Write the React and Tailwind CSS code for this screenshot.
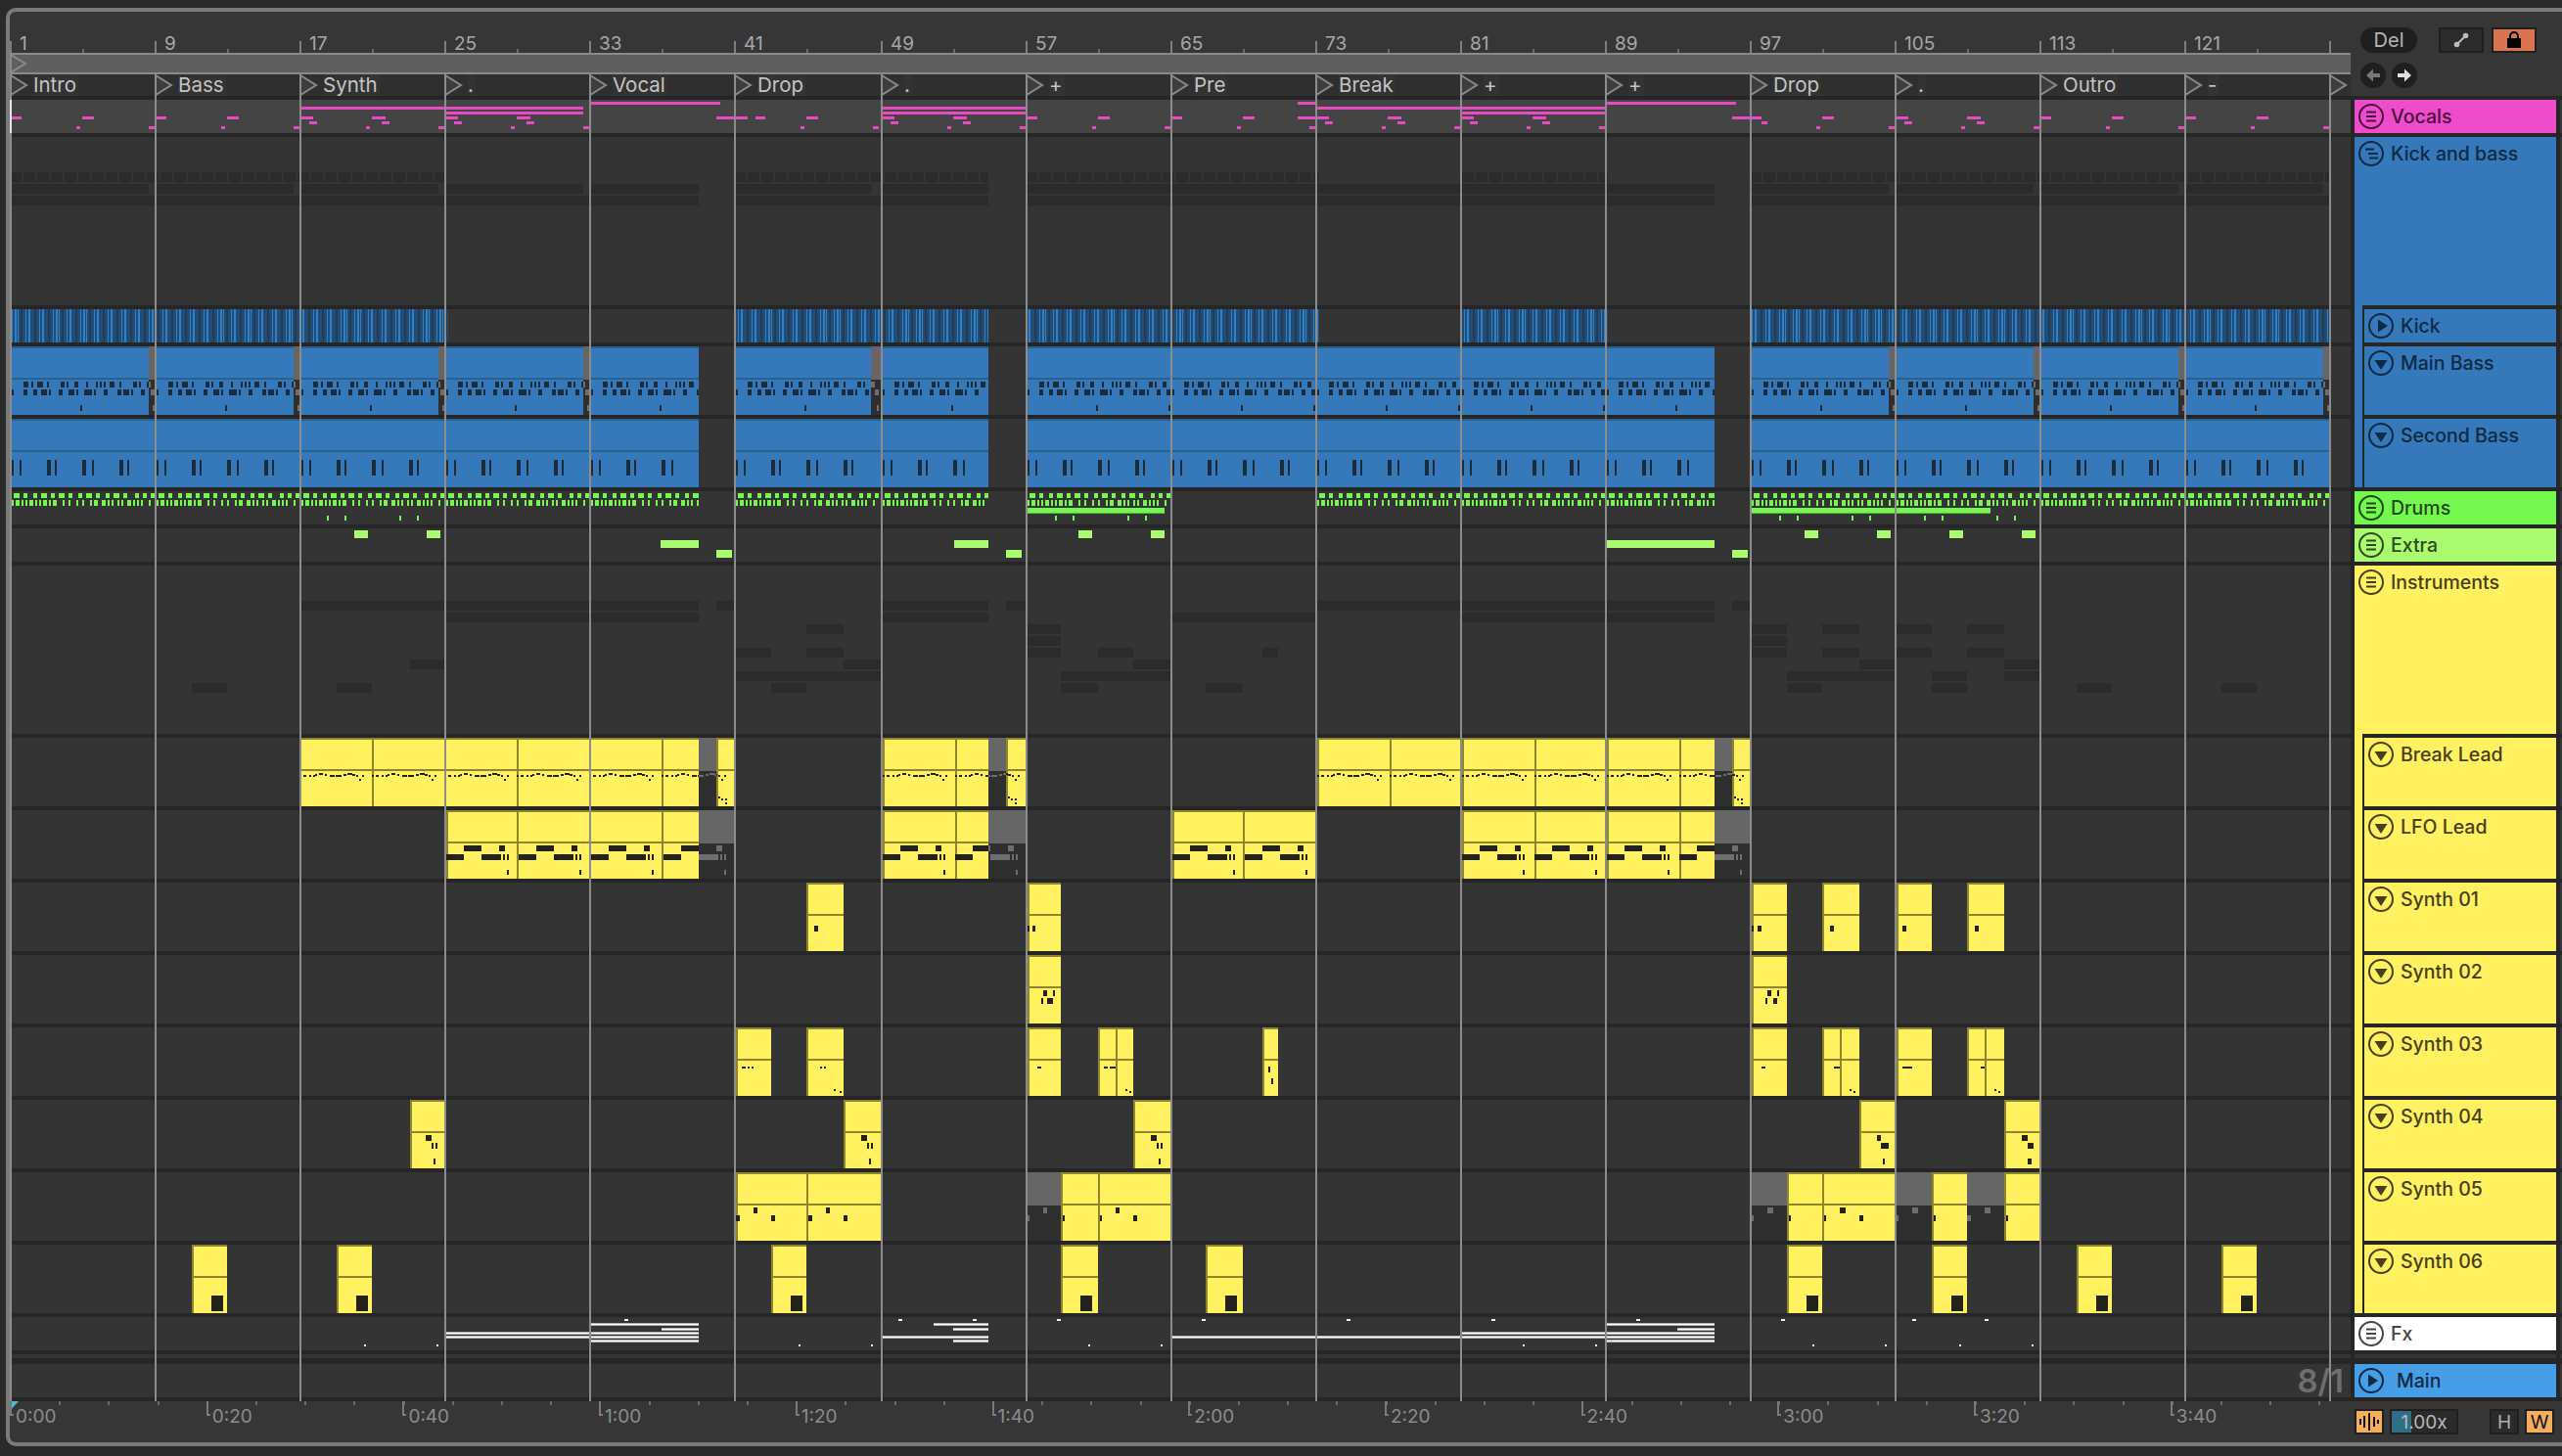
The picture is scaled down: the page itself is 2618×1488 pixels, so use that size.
const lineX = (n) => (n <= 5 ? 10 + 148 * n : 900 + 148 * (n - 6));
const BARS = Array.from({ length: 17 }, (_, n) => n);
const LOCATORS = ['Intro', 'Bass', 'Synth', '.', 'Vocal', 'Drop', '.', '+', 'Pre', 'Break', '+', '+', 'Drop', '.', 'Outro', '-', ''];

const themes = {
  blue: { fill: 'bg-[#3579bb]', edge: 'bg-[#28608f]', border: 'border-[#28608f]', note: '#1b2c3d' },
  yellow: { fill: 'bg-[#fff160]', edge: 'bg-[#8f8730]', border: 'border-[#8f8730]', note: '#24231a' },
  gray: { fill: 'bg-[#2f2f2f]', edge: 'bg-[#666666]', border: 'border-[#666666]', note: '#6e6e6e', title: 'bg-[#666666]' },
};

// all note coordinates are [pageX, yInLane, w, h, colour?]
const NoteSvg = ({ x0, x1, h, notes, fill, left = x0 - 10 }) => (
  <svg
    className="absolute top-0"
    style={{ left }}
    width={x1 - x0}
    height={h}
    viewBox={`${x0} 0 ${x1 - x0} ${h}`}
    shapeRendering="crispEdges"
  >
    {notes.map((n, i) => (
      <rect key={i} x={n[0]} y={n[1]} width={n[2]} height={n[3]} fill={n[4] || fill} />
    ))}
  </svg>
);

const Clip = ({ x0, x1, theme = 'yellow', divs = [], notes = [] }) => {
  const t = themes[theme];
  return (
    <div className={`absolute top-0 h-[70px] ${t.fill}`} style={{ left: x0 - 10, width: x1 - x0 }}>
      <div className={`h-[34px] border-y-2 ${t.border} ${t.title || ''}`} />
      {theme === 'yellow' && <div className={`absolute inset-y-0 left-0 w-0.5 ${t.edge}`} />}
      {divs.map((d) => (
        <div key={d} className={`absolute inset-y-0 w-0.5 ${t.edge}`} style={{ left: d - x0 }} />
      ))}
      <NoteSvg x0={x0} x1={x1} h={70} left={0} notes={notes} fill={t.note} />
    </div>
  );
};

const spread = (starts, pat) => starts.flatMap((s) => pat.map((p) => [s + p[0], p[1], p[2], p[3]]));
const every = (from, to, step) => {
  const out = [];
  for (let x = from; x < to; x += step) out.push(x);
  return out;
};
const bars = BARS.slice(0, 16).map(lineX);

const breakPat = [[0,2,0],[4,3,0],[10,2,0],[14,2,0],[16,2,-1],[20,2,-2],[22,2,-2],[26,2,-1],[31,5,0],[37,6,0],[45,3,-1],[49,5,-2],[54,3,-1],[58,2,0],[61,2,4],[64,2,0]]
  .map(([x, w, d]) => [x, 38 + d, w, 2]);
const breakDots = [[2,60,2,2],[5,62,2,2],[9,62,2,2],[9,66,2,2]];
const lfoPat = [[18,36,18,6],[54,36,6,6],[0,45,18,6],[36,45,20,6],[58,45,2,6],[62,45,2,6],[62,61,2,5]];
const s06 = (x) => [x + 20, 52, 12, 16];

const SYNTHS = [
  {
    name: 'Break Lead',
    clips: [
      [306, 714, [380, 454, 528, 602, 676]], [714, 732, [], 'gray'], [732, 750],
      [902, 1010, [976]], [1010, 1028, [], 'gray'], [1028, 1048],
      [1346, 1752, [1420, 1494, 1568, 1642, 1716]], [1752, 1770, [], 'gray'], [1770, 1788],
    ],
    notes: [
      ...spread(every(306, 732, 74), breakPat),
      ...spread(every(902, 1028, 74), breakPat),
      ...spread(every(1346, 1770, 74), breakPat),
      ...spread([732, 1028, 1770], breakDots),
    ],
  },
  {
    name: 'LFO Lead',
    clips: [
      [456, 714, [528, 602, 676]], [714, 750, [], 'gray'],
      [902, 1010, [976]], [1010, 1048, [], 'gray'],
      [1198, 1344, [1270]],
      [1494, 1752, [1568, 1642, 1716]], [1752, 1788, [], 'gray'],
    ],
    notes: spread([...every(456, 750, 74), ...every(902, 1048, 74), ...every(1198, 1344, 74), ...every(1494, 1788, 74)], lfoPat),
  },
  {
    name: 'Synth 01',
    clips: [[824, 862], [1050, 1084], [1790, 1826], [1862, 1900], [1938, 1974], [2010, 2048]],
    notes: [[832,44,4,6],[1050,44,2,6],[1055,44,3,6],[1790,44,2,6],[1796,44,4,6],[1870,44,4,6],[1944,44,4,6],[2018,44,4,6]],
  },
  {
    name: 'Synth 02',
    clips: [[1050, 1084], [1790, 1826]],
    notes: [[1066,36,4,6],[1076,36,2,6],[1064,44,2,6],[1070,44,6,6],[1806,36,4,6],[1816,36,2,6],[1804,44,2,6],[1812,44,4,6]],
  },
  {
    name: 'Synth 03',
    clips: [[752, 788], [824, 862], [1050, 1084], [1122, 1158, [1140]], [1290, 1306], [1790, 1826], [1862, 1900, [1880]], [1938, 1974], [2010, 2048, [2028]]],
    notes: [
      [758,40,4,2],[764,40,2,2],[768,40,2,2],[838,40,2,2],[842,40,2,2],[852,63,2,2],[858,65,2,2],
      [1060,40,4,2],[1128,40,4,2],[1134,40,6,2],[1150,63,2,2],[1154,65,2,2],[1296,40,2,6],[1299,52,2,6],
      [1800,40,4,2],[1874,40,6,2],[1890,63,2,2],[1894,65,2,2],[1944,40,10,2],[2024,40,4,2],[2038,63,2,2],[2042,65,2,2],
    ],
  },
  {
    name: 'Synth 04',
    clips: [[419, 454], [862, 900], [1158, 1196], [1900, 1936], [2048, 2084]],
    notes: [
      ...spread([417, 862, 1158], [[18,36,6,6],[24,44,2,6],[28,44,2,6],[26,60,2,6]]),
      [1918,36,4,6],[1922,44,8,6],[1924,60,2,6],[2066,36,6,6],[2072,44,4,6],[2076,44,2,6],[2072,60,4,6],
    ],
  },
  {
    name: 'Synth 05',
    clips: [
      [752, 900, [824]], [1050, 1084, [], 'gray'], [1084, 1196, [1122]],
      [1790, 1826, [], 'gray'], [1826, 1936, [1862]], [1938, 1974, [], 'gray'], [1974, 2010], [2010, 2048, [], 'gray'], [2048, 2084],
    ],
    notes: [
      [752,44,4,6],[770,36,4,6],[788,44,4,6],[826,44,4,6],[844,36,4,6],[862,44,4,6],
      [1066,36,4,6],[1050,44,2,6],[1086,44,2,6],[1124,44,2,6],[1140,36,4,6],[1158,44,4,6],
      [1806,36,6,6],[1790,44,2,6],[1828,44,2,6],[1864,44,2,6],[1880,36,6,6],[1900,44,4,6],
      [1954,36,6,6],[1938,44,2,6],[1976,44,2,6],[2028,36,6,6],[2010,44,4,6],[2050,44,2,6],
    ],
  },
  {
    name: 'Synth 06',
    clips: [[196, 232], [344, 380], [788, 824], [1084, 1122], [1232, 1270], [1826, 1862], [1974, 2010], [2122, 2158], [2270, 2306]],
    notes: [196, 344, 788, 1084, 1232, 1826, 1974, 2122, 2270].map(s06),
  },
];

// Kick and bass data
const mainPat = [
  ...[[14,5],[22,2],[28,6],[38,2],[52,4],[58,2],[66,4],[78,2],[88,2],[92,2],[96,2],[102,5],[112,2],[126,4],[132,2],[140,4]].map(([x, w]) => [x, 36, w, 6]),
  ...[[2,2],[14,4],[24,4],[32,6],[40,2],[50,4],[60,6],[68,2],[76,8],[86,2],[96,4],[110,4],[116,6],[124,2],[134,4],[144,4]].map(([x, w]) => [x, 44, w, 6]),
  [72, 60, 2, 6], [146, 60, 2, 6],
];
const MAIN_CLIPS = [
  [10, 152], [152, 160, 'gray'], [160, 300], [300, 308, 'gray'], [308, 448], [448, 456, 'gray'], [456, 596], [596, 604, 'gray'], [604, 714],
  [752, 890], [890, 900, 'gray'], [902, 1010],
  [1050, 1196], [1198, 1344], [1346, 1492], [1494, 1640], [1642, 1752],
  [1790, 1930], [1930, 1938, 'gray'], [1938, 2078], [2078, 2086, 'gray'], [2086, 2226], [2226, 2234, 'gray'], [2234, 2374], [2374, 2380, 'gray'],
];
const SECOND_RANGES = [[10, 714], [750, 1010], [1048, 1752], [1788, 2380]];
const KICK_RANGES = [[10, 458], [750, 1010], [1048, 1348], [1494, 1643], [1788, 2380]];
const secondPat = [[0,2],[8,2],[36,4],[44,2],[72,4],[82,2],[110,4],[118,2]].map(([x, w]) => [x + 2, 42, w, 16]);
const mainNotes = spread(bars, mainPat);
const secondNotes = spread(bars, secondPat);

const kickNotes = every(10, 2380, 14).flatMap((x, i) => {
  const out = [[x + 11, 0, 2, 34, '#2a3a4a'], [x + 2, 0, 1, 34, '#3180c4'], [x + 5, 0, 2, 34, '#3180c4']];
  if (i % 5 === 0 || i % 7 === 3) out.push([x + 8, 0, 1, 34, '#3180c4']);
  return out;
});

// Drums data
const GREEN = '#74f84f';
const DRUM_RANGES = [[10, 714], [750, 1010], [1050, 1196], [1346, 1752], [1788, 2380]];
const green1 = [[4,6],[14,4],[24,4],[32,6],[42,4],[50,6],[60,4],[70,4],[78,6],[88,4],[98,4],[106,6],[116,4],[128,4],[136,4],[144,4]];
const green2 = [[2,2],[6,4],[12,2],[16,2],[20,4],[26,2],[30,2],[34,4],[40,2],[44,4],[54,2],[60,2],[68,2],[74,2],[82,2],[86,4],[94,4],[100,2],[104,2],[110,2],[114,2],[120,4],[126,2],[130,2],[134,2],[142,2]];
const drumNotes = [
  ...spread(bars, green1.map(([x, w]) => [x, 2, w, 5])),
  ...spread(bars, green2.map(([x, w]) => [x, 9, w, 6])),
];
const drumExtras = [
  [1050,17,140,5],[1050,22,140,1,'#55b83a'],[1790,17,244,5],[1790,22,244,1,'#55b83a'],
  ...spread([306, 1050, 1790, 1938], [[28,25,2,5],[46,25,2,5],[102,25,2,5],[120,25,2,5]]),
];

const LIGHT = '#a9fb70';
const extraNotes = [
  [362,2,14,8],[436,2,14,8],[1102,2,14,8],[1176,2,14,8],[1844,2,14,8],[1918,2,14,8],[1992,2,14,8],[2066,2,14,8],
  [675,12,39,8],[975,12,35,8],[1642,12,110,8],
  [732,22,16,8],[1028,22,16,8],[1770,22,16,8],
];

// Vocals data
const PINK = '#e84ac4';
const vocalBase = [[1,17,11,3],[74,17,12,3],[68,27,4,3],[142,27,6,3]];
const vocalRich = [[2,17,12,3],[74,17,14,3],[10,22,8,3],[84,22,8,3],[68,27,4,3],[142,27,6,3]];
const vocalNotes = [
  ...spread([0, 1, 5, 7, 8, 12, 14, 15].map(lineX), vocalBase),
  ...spread([2, 3, 6, 9, 10, 13].map(lineX), vocalRich),
  [306,7,148,3],[456,7,140,3],[456,12,140,3],[604,2,132,3],[732,17,32,3],[772,17,10,3],
  [902,7,146,3],[902,12,146,3],[1326,2,18,3],[1326,17,30,3],[1346,7,146,3],[1494,7,146,3],[1494,12,146,3],[1642,2,132,3],[1770,17,30,3],[1800,22,6,3],
];

// Fx data
const fxLine = (x, y, w) => [[x, y, w, 3, '#b5b5b5'], [x, y + 1, w, 1, '#ffffff']];
const fxNotes = [
  ...fxLine(454,15,148),...fxLine(454,19,148),
  ...fxLine(604,6,110),...fxLine(676,11,38),...fxLine(604,15,110),...fxLine(604,19,110),...fxLine(604,23,110),
  ...fxLine(954,6,56),...fxLine(974,11,36),...fxLine(902,19,108),...fxLine(974,23,36),
  ...fxLine(1198,19,296),
  ...fxLine(1494,15,146),...fxLine(1494,19,146),
  ...fxLine(1642,6,110),...fxLine(1714,11,38),...fxLine(1642,15,110),...fxLine(1642,19,110),...fxLine(1642,23,110),
  ...[638,918,994,1080,1228,1376,1524,1672,1820,1954,2028].map((x) => [x, 2, 4, 2, '#eeeeee']),
  ...[372,446,816,890,1112,1186,1556,1630,1852,1926,2002,2076].map((x) => [x, 28, 2, 2, '#eeeeee']),
];

// faint overview of the folded groups
const FAINT = '#2b2b2b';
const kickGroup = [
  ...KICK_RANGES.flatMap(([a, b]) => every(a, b, 14).map((x) => [x, 36, Math.min(12, b - x), 10, FAINT])),
  ...MAIN_CLIPS.filter((c) => !c[2]).map(([a, b]) => [a, 48, b - a, 10, FAINT]),
  ...SECOND_RANGES.map(([a, b]) => [a, 60, b - a, 10, FAINT]),
];
const synthGroup = SYNTHS.flatMap((row, r) =>
  row.clips.filter((c) => c[3] !== 'gray').map(([a, b]) => [a, 36 + 12 * r, b - a, 10, FAINT]),
);

const headerThemes = {
  pink: { cell: 'bg-[#ed4ccb]', text: 'text-[#4d0c3e]' },
  blue: { cell: 'bg-[#3579bb]', text: 'text-[#0f2a45]' },
  green: { cell: 'bg-[#74f84f]', text: 'text-[#1f4a12]' },
  light: { cell: 'bg-[#a9fb70]', text: 'text-[#33491f]' },
  yellow: { cell: 'bg-[#fff160]', text: 'text-[#45401a]' },
  white: { cell: 'bg-white', text: 'text-[#454545]' },
  main: { cell: 'bg-[#459ee6]', text: 'text-[#0f2a45]' },
};

const TrackIcon = ({ kind }) => (
  <svg width="26" height="26" viewBox="0 0 26 26" className="shrink-0" fill="currentColor" stroke="none">
    <circle cx="13" cy="13" r="12" fill="none" stroke="currentColor" strokeWidth="2" />
    {kind === 'menu' && (
      <g stroke="currentColor" strokeWidth="2">
        <path d="M8 8.5h10M8 13h10M8 17.5h10" />
      </g>
    )}
    {kind === 'open' && (
      <g stroke="currentColor" strokeWidth="2">
        <path d="M7 8.5h9M10 13h10M11 17.5h9" />
      </g>
    )}
    {kind === 'play' && <path d="M10 6.5 20 13 10 19.5Z" />}
    {kind === 'down' && <path d="M6.5 10h13L13 20Z" />}
  </svg>
);

const HeaderLine = ({ name, icon, textClass = 'ml-[7px]' }) => (
  <div className="flex h-[34px] items-center pl-1">
    <TrackIcon kind={icon} />
    <span className={`${textClass} pt-0.5 text-[19.5px] font-medium whitespace-nowrap`}>{name}</span>
  </div>
);

const Header = ({ name, theme, icon, textClass }) => {
  const t = headerThemes[theme];
  return (
    <div className={`h-full w-[206px] shrink-0 ${t.text} ${t.cell}`}>
      <HeaderLine name={name} icon={icon} textClass={textClass} />
    </div>
  );
};

const ChildHeader = ({ name, theme, icon }) => {
  const t = headerThemes[theme];
  return (
    <div className={`flex h-full w-[206px] shrink-0 ${t.text}`}>
      <div className={`relative w-2 shrink-0 ${t.cell}`}>
        <div className={`absolute -top-1 left-0 h-1 w-2 ${t.cell}`} />
      </div>
      <div className="w-0.5 shrink-0 bg-[#262626]" />
      <div className={`flex-1 ${t.cell}`}>
        <HeaderLine name={name} icon={icon} />
      </div>
    </div>
  );
};

const Row = ({ height, lane = 'bg-[#343434]', header, children }) => (
  <div className={`flex ${height}`}>
    <div className={`relative w-[2392px] shrink-0 overflow-hidden ${lane}`}>{children}</div>
    <div className="w-1 shrink-0" />
    {header}
    <div className="w-1 shrink-0" />
    <div className="w-0.5 shrink-0 bg-[#363636]" />
  </div>
);

const Locator = ({ x, h = 22 }) => (
  <svg className="absolute top-0" style={{ left: x - 10 }} width="20" height={h} viewBox={`0 0 20 ${h}`}>
    <polygon points={`1,1 17,${h / 2} 1,${h - 1}`} fill="#3d3d3d" stroke="#8a8a8a" strokeWidth="2" />
  </svg>
);

const BarRuler = () => (
  <div className="relative h-[42px] text-[19px] text-[#a8a8a8]">
    {BARS.map((n) => (
      <div key={n}>
        <div className="absolute bottom-0 h-3 w-0.5 bg-[#7d7d7d]" style={{ left: lineX(n) - 10 }} />
        {n < 16 && <div className="absolute bottom-0 h-1 w-0.5 bg-[#6a6a6a]" style={{ left: lineX(n) + 64 }} />}
        {n < 16 && (
          <span className="absolute top-[21px] leading-[24px]" style={{ left: lineX(n) }}>
            {n * 8 + 1}
          </span>
        )}
      </div>
    ))}
  </div>
);

const TIMES = ['0:00', '0:20', '0:40', '1:00', '1:20', '1:40', '2:00', '2:20', '2:40', '3:00', '3:20', '3:40'];

const TimeRuler = () => (
  <div className="relative h-[42px] w-[2392px] shrink-0 text-[19px] text-[#8c8c8c]">
    <div className="absolute left-0 top-0 h-0 w-0 border-r-[9px] border-t-[10px] border-r-transparent border-t-[#4db8d8]" />
    {Array.from({ length: 48 }, (_, i) => i).map((i) => (
      <div key={i} className="absolute top-0 h-1 w-0.5 bg-[#6a6a6a]" style={{ left: i * 50.2 }} />
    ))}
    {TIMES.map((t, k) => (
      <div key={t}>
        <div
          className="absolute top-0 h-[15px] w-1 border-b-2 border-l-2 border-[#7a7a7a]"
          style={{ left: k * 200.7 }}
        />
        <span className="absolute top-[4px] leading-[24px]" style={{ left: k * 200.7 + 6 }}>
          {t}
        </span>
      </div>
    ))}
  </div>
);

const IconArrow = ({ flip, color }) => (
  <svg width="16" height="16" viewBox="0 0 16 16" className={flip ? 'rotate-180' : ''}>
    <path d="M1 8 8 1.5V6h7v4H8v4.5Z" fill={color} />
  </svg>
);

const TopControls = () => (
  <div className="flex-1 pl-2.5 pt-4">
    <div className="flex items-center">
      <div className="flex h-[26px] w-[58px] items-center justify-center rounded-full bg-[#1f1f1f] text-[20px] leading-none text-[#b4b4b4]">
        Del
      </div>
      <div className="ml-[22px] flex h-[26px] w-[46px] items-center justify-center border-2 border-[#1f1f1f] bg-[#2b2b2b]">
        <svg width="16" height="16" viewBox="0 0 16 16">
          <path d="M3.5 12.5 12.5 3.5" stroke="#bdbdbd" strokeWidth="2" />
          <circle cx="3.5" cy="12.5" r="2.8" fill="#bdbdbd" />
          <circle cx="12.5" cy="3.5" r="2.8" fill="#bdbdbd" />
        </svg>
      </div>
      <div className="ml-2 flex h-[26px] w-[46px] items-center justify-center border-2 border-[#1f1f1f] bg-[#d97350]">
        <svg width="16" height="18" viewBox="0 0 16 18">
          <path d="M4 8V5a4 4 0 0 1 8 0v3" fill="none" stroke="#000" strokeWidth="2" />
          <rect x="1" y="7" width="14" height="10" fill="#000" />
        </svg>
      </div>
    </div>
    <div className="mt-2.5 flex gap-1.5">
      <div className="flex h-[26px] w-[26px] items-center justify-center rounded-full bg-[#1f1f1f]">
        <IconArrow color="#777777" />
      </div>
      <div className="flex h-[26px] w-[26px] items-center justify-center rounded-full bg-[#1f1f1f]">
        <IconArrow flip color="#e0e0e0" />
      </div>
    </div>
  </div>
);

const BottomControls = () => (
  <div className="flex flex-1 items-start pl-1 pt-2 text-[19px] leading-none">
    <div className="flex h-[26px] w-[30px] items-center justify-center border-2 border-[#1f1f1f] bg-[#f4ae5e]">
      <svg width="22" height="18" viewBox="0 0 22 18" stroke="#111" strokeWidth="2">
        <path d="M2 6v6M6 3v12M11 0v18M16 4v10M20 7v4" />
      </svg>
    </div>
    <div className="relative ml-1.5 flex h-[26px] w-[70px] items-center justify-center border-2 border-[#1f1f1f] bg-[#2a2a2a] text-[#b8b8b8]">
      <div className="absolute inset-y-0 left-0 w-5 bg-[#2f6f85]" />
      <span className="relative">1.00x</span>
    </div>
    <div className="ml-8 flex h-[26px] w-[30px] items-center justify-center border-2 border-[#1f1f1f] bg-[#2a2a2a] text-[#b0b0b0]">
      H
    </div>
    <div className="ml-1.5 flex h-[26px] w-[30px] items-center justify-center border-2 border-[#1f1f1f] bg-[#f4ae5e] text-[#111111]">
      W
    </div>
  </div>
);

export default function App() {
  return (
    <div className="h-[1488px] w-[2618px] overflow-hidden bg-[#2a2a2a] pl-1.5 pt-2 font-[Inter,sans-serif]">
      <div className="relative h-[1470px] rounded-l-[10px] border-y-4 border-l-4 border-[#7a7a7a] bg-[#363636]">
        {/* top band */}
        <div className="flex h-[86px]">
          <div className="w-[2392px] shrink-0">
            <BarRuler />
            <div className="relative h-[22px] border-y-2 border-[#8a8a8a] bg-[#5f5f5f]">
              <svg className="absolute left-0 top-0" width="18" height="18" viewBox="0 0 18 18">
                <polygon points="1,0 16,9 1,18" fill="#5f5f5f" stroke="#8a8a8a" strokeWidth="2" />
              </svg>
            </div>
            <div className="relative h-[22px] bg-[#2f2f2f]">
              {LOCATORS.map((name, n) => (
                <div key={n}>
                  <Locator x={lineX(n)} />
                  {name && (
                    <span
                      className="absolute top-0 bg-[#333333] pr-0.5 text-[20.5px] leading-[22px] text-[#c4c4c4]"
                      style={{ left: lineX(n) + 14 }}
                    >
                      {name}
                    </span>
                  )}
                </div>
              ))}
            </div>
          </div>
          <TopControls />
        </div>

        {/* tracks */}
        <div className="flex flex-col gap-1 bg-[#262626] py-1">
          <Row height="h-[34px]" lane="bg-[#444444]" header={<Header name="Vocals" theme="pink" icon="menu" />}>
            <NoteSvg x0={10} x1={2402} h={34} notes={vocalNotes} fill={PINK} />
            <div className="absolute inset-y-0 left-0 z-20 w-0.5 bg-[#dfe8ee]" />
          </Row>

          <Row height="h-[172px]" header={<Header name="Kick and bass" theme="blue" icon="open" />}>
            <NoteSvg x0={10} x1={2402} h={172} notes={kickGroup} />
          </Row>
          <Row height="h-[34px]" header={<ChildHeader name="Kick" theme="blue" icon="play" />}>
            {KICK_RANGES.map(([a, b]) => (
              <div key={a} className="absolute inset-y-0 bg-[#1f4d78]" style={{ left: a - 10, width: b - a }}>
                <NoteSvg x0={a} x1={b} h={34} left={0} notes={kickNotes} />
              </div>
            ))}
          </Row>
          <Row height="h-[70px]" header={<ChildHeader name="Main Bass" theme="blue" icon="down" />}>
            {MAIN_CLIPS.map(([a, b, g]) => (
              <Clip key={a} x0={a} x1={b} theme={g || 'blue'} notes={mainNotes} />
            ))}
          </Row>
          <Row height="h-[70px]" header={<ChildHeader name="Second Bass" theme="blue" icon="down" />}>
            {SECOND_RANGES.map(([a, b]) => (
              <Clip key={a} x0={a} x1={b} theme="blue" notes={secondNotes} />
            ))}
          </Row>

          <Row height="h-[34px]" header={<Header name="Drums" theme="green" icon="menu" />}>
            {DRUM_RANGES.map(([a, b]) => (
              <NoteSvg key={a} x0={a} x1={b} h={34} notes={drumNotes} fill={GREEN} />
            ))}
            <NoteSvg x0={10} x1={2402} h={34} notes={drumExtras} fill={GREEN} />
          </Row>
          <Row height="h-[34px]" header={<Header name="Extra" theme="light" icon="menu" />}>
            <NoteSvg x0={10} x1={2402} h={34} notes={extraNotes} fill={LIGHT} />
          </Row>

          <Row height="h-[172px]" header={<Header name="Instruments" theme="yellow" icon="menu" />}>
            <NoteSvg x0={10} x1={2402} h={172} notes={synthGroup} />
          </Row>
          {SYNTHS.map((row) => (
            <Row key={row.name} height="h-[70px]" header={<ChildHeader name={row.name} theme="yellow" icon="down" />}>
              {row.clips.map(([a, b, divs, g]) => (
                <Clip key={a} x0={a} x1={b} divs={divs} theme={g || 'yellow'} notes={row.notes} />
              ))}
            </Row>
          ))}

          <Row height="h-[34px]" header={<Header name="Fx" theme="white" icon="menu" />}>
            <NoteSvg x0={10} x1={2402} h={34} notes={fxNotes} />
          </Row>
          <Row height="h-1" header={<div className="w-[206px] shrink-0 bg-[#343434]" />} />
          <div className="mt-0.5">
            <Row height="h-[34px]" header={<Header name="Main" theme="main" icon="play" textClass="ml-[13px]" />}>
              <span className="absolute right-[7px] top-0 text-[33px] font-semibold leading-[34px] text-[#6e6e6e]">8/1</span>
            </Row>
          </div>
        </div>

        {/* bottom band */}
        <div className="flex">
          <TimeRuler />
          <BottomControls />
        </div>

        {/* locator lines over the tracks */}
        <div className="pointer-events-none absolute inset-x-0 bottom-[42px] top-[64px] z-10">
          {BARS.map((n) => (
            <div key={n} className="absolute inset-y-0 w-0.5 bg-[#8c8c8c]" style={{ left: lineX(n) - 10 }} />
          ))}
        </div>
      </div>
    </div>
  );
}
